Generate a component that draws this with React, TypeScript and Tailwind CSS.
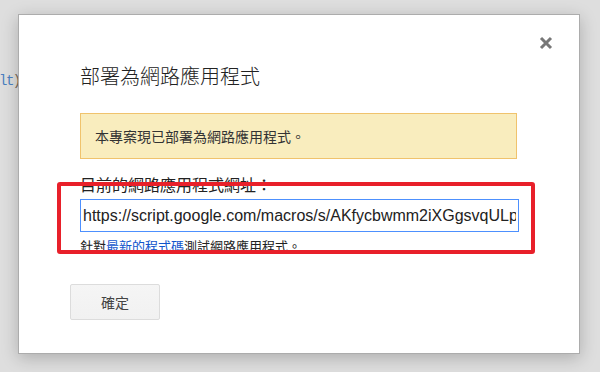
export default function App() {
  return (
    <div
      className="relative flex items-start w-[600px] h-[372px] overflow-hidden bg-[#dedede] pl-[18px] pt-[14px]"
      style={{ fontFamily: '"Noto Sans CJK TC", "Liberation Sans", sans-serif' }}
    >
      {/* editor text peeking out behind the modal */}
      <div className="absolute left-[-1px] top-[72px] font-['Liberation_Mono',monospace] text-[14px] leading-[18px] tracking-[-1.5px]">
        <span className="text-[#4a7fc0]">lt</span>
        <span className="text-[#7a6a58]">)</span>
      </div>

      {/* dialog */}
      <div className="relative w-[562px] h-[340px] bg-white border border-[#acacac] shadow-[0_4px_16px_rgba(0,0,0,0.22)] flex flex-col items-start pl-[61px] pt-[49px]">
        <button className="absolute right-[26px] top-[21px] w-[14px] h-[14px]">
          <svg viewBox="0 0 14 14" className="w-[14px] h-[14px]">
            <path d="M2 2 L12 12 M12 2 L2 12" stroke="#777" strokeWidth="3" />
          </svg>
        </button>

        <h2 className="text-[20px] leading-[24px] text-[#222] font-light">
          部署為網路應用程式
        </h2>

        <div className="mt-[25px] w-[437px] h-[46px] flex items-center pl-[14px] bg-[#f9edbe] border border-[#f0c36d] text-[14px] text-[#333]">
          本專案現已部署為網路應用程式。
        </div>

        <div className="mt-[15px] flex flex-col gap-[5px]">
          <label className="text-[16px] leading-[20px] text-[#222]">
            目前的網路應用程式網址：
          </label>
          <input
            readOnly
            value="https://script.google.com/macros/s/AKfycbwmm2iXGgsvqULpJQm3Xx7kZr"
            className="block w-[439px] h-[33px] px-[2px] border border-[#4d90fe] text-[16px] text-[#222] font-['Liberation_Sans',sans-serif] outline-none"
          />
        </div>

        <p className="mt-[6px] text-[13px] leading-[16px] text-[#222]">
          針對<span className="text-[#15c]">最新的程式碼</span>測試網路應用程式。
        </p>

        <button className="mt-[30px] -ml-[10px] w-[90px] h-[36px] rounded-[2px] border border-[#dcdcdc] bg-gradient-to-b from-[#f5f5f5] to-[#f1f1f1] text-[14px] text-[#444]">
          確定
        </button>
      </div>

      {/* red annotation box */}
      <div className="absolute left-[57px] top-[182px] w-[478px] h-[72px] border-4 border-[#e8202a] rounded-[3px]" />
    </div>
  );
}
